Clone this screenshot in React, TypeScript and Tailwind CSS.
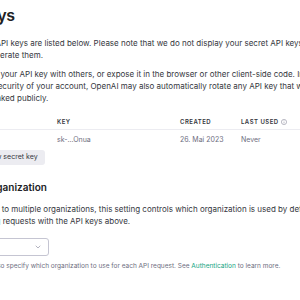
import { ChevronDown } from "lucide-react";

const font = { fontFamily: "Inter, 'Noto Sans', sans-serif" };

function InfoIcon() {
  return (
    <svg width="6" height="6" viewBox="0 0 12 12" className="ml-[2px] text-[#8e8ea0]">
      <circle cx="6" cy="6" r="5.2" fill="none" stroke="currentColor" strokeWidth="1.2" />
      <line x1="6" y1="5.2" x2="6" y2="8.8" stroke="currentColor" strokeWidth="1.2" />
      <circle cx="6" cy="3.4" r="0.7" fill="currentColor" />
    </svg>
  );
}

export default function App() {
  return (
    <div className="w-[300px] h-[300px] overflow-hidden bg-white" style={font}>
      <div className="-ml-[50px] w-[440px] pt-[5px]">
        <h1 className="text-[16px] leading-[20px] font-semibold text-[#202123] tracking-[-0.2px]">API keys</h1>

        <p className="mt-[12px] text-[8px] leading-[12px] text-[#353740] whitespace-nowrap">
          Your secret API keys are listed below. Please note that we do not display your secret API keys again
          <br />
          after you generate them.
        </p>

        <p className="mt-[7px] text-[8px] leading-[12px] text-[#353740] whitespace-nowrap">
          Do not share your API key with others, or expose it in the browser or other client-side code. In order to
          <br />
          protect the security of your account, OpenAI may also automatically rotate any API key that we've
          <br />
          found has leaked publicly.
        </p>

        <div className="mt-[14px] grid grid-cols-[107px_123px_61px_1fr] border-b border-[#ececf1] pb-[3px] text-[6px] leading-[8px] font-semibold tracking-[0.08em] text-[#353740]">
          <div>NAME</div>
          <div>KEY</div>
          <div>CREATED</div>
          <div className="flex items-center">
            LAST USED
            <InfoIcon />
          </div>
        </div>
        <div className="grid grid-cols-[107px_123px_61px_1fr] pt-[5px] pb-[5px] text-[7px] leading-[10px] text-[#6e6e80]">
          <div>Test</div>
          <div>sk-...Onua</div>
          <div>26. Mai 2023</div>
          <div>Never</div>
        </div>

        <button className="flex h-[15px] items-center rounded-[3px] bg-[#ececf1] px-[7px] text-[7px] text-[#353740]">
          + Create new secret key
        </button>

        <h2 className="mt-[15px] -ml-[1px] text-[10px] leading-[14px] font-semibold text-[#202123]">Default organization</h2>

        <p className="mt-[9px] text-[8px] leading-[12px] text-[#353740] whitespace-nowrap">
          If you belong to multiple organizations, this setting controls which organization is used by default
          <br />
          when making requests with the API keys above.
        </p>

        <div className="mt-[11px] flex h-[18px] w-[99px] items-center justify-between rounded-[3px] border border-[#c5c5d2] pl-[6px] pr-[6px] text-[7px] text-[#353740]">
          <span>Personal</span>
          <ChevronDown size={8} className="text-[#8e8ea0]" />
        </div>

        <p className="mt-[6px] -ml-[3px] text-[6.5px] leading-[9px] text-[#6e6e80] whitespace-nowrap">
          Note: You can also specify which organization to use for each API request. See{" "}
          <span className="text-[#10a37f]">Authentication</span> to learn more.
        </p>
      </div>
    </div>
  );
}
